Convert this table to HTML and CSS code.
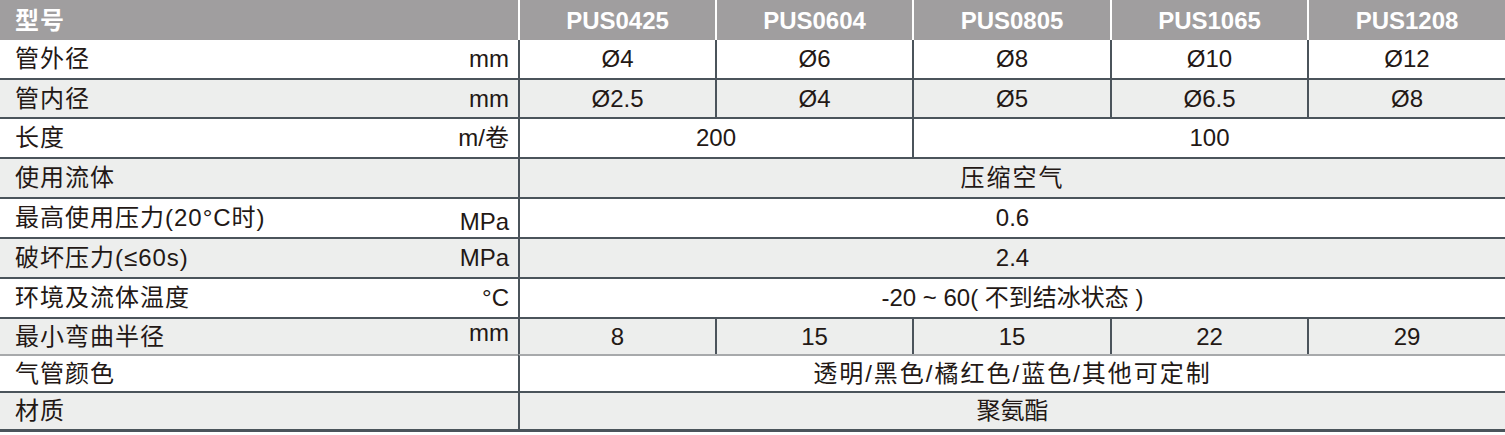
FILE: index.html
```html
<!DOCTYPE html>
<html lang="zh-CN">
<head>
<meta charset="utf-8">
<title>PUS 气管规格</title>
<link rel="stylesheet" href="styles.css">
</head>
<body>
<table class="spec">
  <colgroup>
    <col class="c-label">
    <col class="c-a">
    <col class="c-a">
    <col class="c-b">
    <col class="c-a">
    <col class="c-b">
  </colgroup>
  <thead>
    <tr class="head">
      <th class="lbl"><span class="name">型号</span></th>
      <th>PUS0425</th>
      <th>PUS0604</th>
      <th>PUS0805</th>
      <th>PUS1065</th>
      <th>PUS1208</th>
    </tr>
  </thead>
  <tbody>
    <tr class="r-w h38 first">
      <td class="lbl"><div class="lw"><span>管外径</span><span>mm</span></div></td>
      <td>Ø4</td><td>Ø6</td><td>Ø8</td><td>Ø10</td><td>Ø12</td>
    </tr>
    <tr class="r-g h39">
      <td class="lbl"><div class="lw"><span>管内径</span><span>mm</span></div></td>
      <td>Ø2.5</td><td>Ø4</td><td>Ø5</td><td>Ø6.5</td><td>Ø8</td>
    </tr>
    <tr class="r-w h40">
      <td class="lbl"><div class="lw"><span>长度</span><span>m/卷</span></div></td>
      <td colspan="2">200</td><td colspan="3">100</td>
    </tr>
    <tr class="r-g h40">
      <td class="lbl"><div class="lw"><span>使用流体</span><span></span></div></td>
      <td colspan="5" class="wide">压缩空气</td>
    </tr>
    <tr class="r-w h40">
      <td class="lbl"><div class="lw"><span>最高使用压力(20°C时)</span><span class="low">MPa</span></div></td>
      <td colspan="5">0.6</td>
    </tr>
    <tr class="r-g h40">
      <td class="lbl"><div class="lw"><span>破坏压力(≤60s)</span><span>MPa</span></div></td>
      <td colspan="5">2.4</td>
    </tr>
    <tr class="r-w h40">
      <td class="lbl"><div class="lw"><span>环境及流体温度</span><span>°C</span></div></td>
      <td colspan="5">-20 ~ 60( 不到结冰状态 )</td>
    </tr>
    <tr class="r-g h37">
      <td class="lbl"><div class="lw"><span>最小弯曲半径</span><span class="high">mm</span></div></td>
      <td>8</td><td>15</td><td>15</td><td>22</td><td>29</td>
    </tr>
    <tr class="r-w h37 light">
      <td class="lbl"><div class="lw"><span>气管颜色</span><span></span></div></td>
      <td colspan="5" class="wide">透明/黑色/橘红色/蓝色/其他可定制</td>
    </tr>
    <tr class="r-g h41 last">
      <td class="lbl"><div class="lw"><span>材质</span><span></span></div></td>
      <td colspan="5">聚氨酯</td>
    </tr>
  </tbody>
</table>
</body>
</html>
```

FILE: styles.css
```css
html, body {
  margin: 0;
  padding: 0;
  background: #ffffff;
}

.spec {
  width: 1505px;
  table-layout: fixed;
  border-collapse: separate;
  border-spacing: 0;
  font-family: "Liberation Sans", "Noto Sans CJK SC", sans-serif;
  font-size: 24px;
  color: #231815;
}

.c-label { width: 518px; }
.c-a { width: 197px; }
.c-b { width: 198px; }

.spec th,
.spec td {
  box-sizing: border-box;
  padding: 0;
  text-align: center;
  vertical-align: middle;
  white-space: nowrap;
  line-height: 1;
}

.head th {
  height: 40px;
  background: #a09e9f;
  color: #ffffff;
  font-weight: bold;
  border-left: 2px solid #ffffff;
  padding-top: 1px;
}

.head th.lbl {
  border-left: none;
  text-align: left;
  padding-left: 15px;
}

.name {
  letter-spacing: 1px;
}

.spec td {
  border-left: 2px solid #4b545b;
  border-top: 2px solid #4b545b;
}

.spec td.lbl {
  border-left: none;
  text-align: left;
}

.spec td.wide {
  letter-spacing: 2px;
}

.first td { border-top: none; }
.light td { border-top: 2px solid #a7a9ab; }
.last td { border-bottom: 3px solid #4b545b; }

.r-w td { background: #ffffff; }
.r-g td { background: #edeeed; }

.h37 td { height: 37px; }
.h38 td { height: 38px; }
.h39 td { height: 39px; }
.h40 td { height: 40px; }
.h41 td { height: 41px; }

.lw {
  display: flex;
  justify-content: space-between;
  align-items: center;
  padding: 0 9px 0 15px;
  letter-spacing: 1px;
}

.lw span:last-child {
  letter-spacing: 0;
}

.low { position: relative; top: 4px; }
.high { position: relative; top: -4px; }
```
